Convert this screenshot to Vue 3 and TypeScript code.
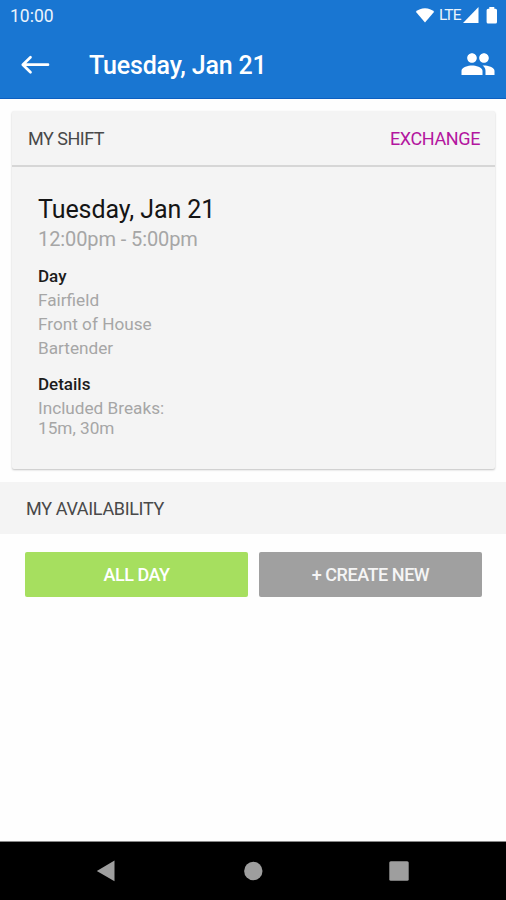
<script setup lang="ts">
interface ShiftGroup {
  title: string
  lines: string[]
  tight?: boolean
}

const date = 'Tuesday, Jan 21'
const hours = '12:00pm - 5:00pm'
const groups: ShiftGroup[] = [
  { title: 'Day', lines: ['Fairfield', 'Front of House', 'Bartender'] },
  { title: 'Details', lines: ['Included Breaks:', '15m, 30m'], tight: true },
]
</script>

<template>
  <div class="screen">
    <header class="top">
      <div class="status">
        <span class="clock">10:00</span>
        <div class="signals">
          <svg class="wifi" width="20" height="16" viewBox="0 0 20 16">
            <path d="M.8 4.7C3.3 2.4 6.4 1.2 10 1.2s6.700 1.200 9.200 3.500L10 15.400z" />
          </svg>
          <span class="lte">LTE</span>
          <svg class="cell" width="16" height="16" viewBox="0 0 16 16"><path d="M15.500 0v16H0z" /></svg>
          <svg class="battery" width="12" height="17" viewBox="0 0 12 17">
            <path d="M3.300 0h5v1.800h1.200q1.500 0 1.500 1.500v11.700q0 1.500-1.500 1.500h-7.400q-1.500 0-1.500-1.500V3.300q0-1.500 1.500-1.500h1.200z" />
          </svg>
        </div>
      </div>
      <div class="bar">
        <button class="icon-button" aria-label="Back">
          <svg width="30" height="20" viewBox="0 0 30 20">
            <path class="arrow" d="M28 9.700H3M10.500 2.200L2.800 9.700l7.700 7.600" />
          </svg>
        </button>
        <h1 class="title">{{ date }}</h1>
        <button class="icon-button people" aria-label="People">
          <svg width="36" height="36" viewBox="0 0 24 24">
            <path d="M16 11.200c1.770 0 3.200-1.430 3.200-3.200s-1.430-3.200-3.200-3.200-3.200 1.430-3.200 3.200 1.430 3.200 3.200 3.200zM8 11.200c1.770 0 3.200-1.430 3.200-3.200S9.770 4.800 8 4.800 4.800 6.230 4.800 8s1.430 3.200 3.200 3.200zM8 13c-2.330 0-7 1.170-7 3.500V19.300h14v-2.800c0-2.330-4.670-3.500-7-3.500zM16 13c-.29 0-.62.02-.97.05 1.160.84 1.970 1.970 1.970 3.450v2.800h6v-2.800c0-2.330-4.670-3.500-7-3.500z" />
          </svg>
        </button>
      </div>
    </header>

    <main class="content">
      <section class="card">
        <div class="card-head">
          <span class="section-label shift-label">MY SHIFT</span>
          <button class="exchange">EXCHANGE</button>
        </div>
        <div class="card-body">
          <h2 class="date">{{ date }}</h2>
          <p class="hours">{{ hours }}</p>
          <div v-for="group in groups" :key="group.title" class="group" :class="{ tight: group.tight }">
            <h3 class="group-title">{{ group.title }}</h3>
            <p v-for="line in group.lines" :key="line" class="line">{{ line }}</p>
          </div>
        </div>
      </section>

      <div class="section-bar">
        <span class="section-label">MY AVAILABILITY</span>
      </div>
      <div class="actions">
        <button class="action all-day">ALL DAY</button>
        <button class="action create">+ CREATE NEW</button>
      </div>
    </main>

    <nav class="nav">
      <svg width="20" height="22" viewBox="0 0 20 22"><path d="M18.500.5v20.700L.8 10.900z" /></svg>
      <svg width="20" height="20" viewBox="0 0 20 20"><circle cx="10.300" cy="10" r="9.200" /></svg>
      <svg width="20" height="20" viewBox="0 0 20 20"><rect x=".3" y=".3" width="19.400" height="19.400" rx="1.500" /></svg>
    </nav>
  </div>
</template>

<style>
body {
  background: #fff;
}
</style>

<style scoped>
.screen {
  display: flex;
  flex-direction: column;
  width: 506px;
  height: 900px;
  overflow: hidden;
  background: #fefefe;
  font-family: Roboto, "Liberation Sans", sans-serif;
}
h1, h2, h3, p {
  margin: 0;
  font-weight: 400;
}
button {
  padding: 0;
  border: 0;
  background: none;
  font-family: inherit;
}
svg {
  display: block;
  flex: none;
}
.top {
  box-sizing: border-box;
  height: 99px;
  background: #1976d2;
  border-bottom: 1px solid #0d5fc0;
  color: #fff;
  fill: #fff;
}
.status {
  display: flex;
  justify-content: space-between;
  height: 32px;
  padding: 0 8px 0 10px;
}
.clock {
  font-size: 17.500px;
  line-height: 32px;
  color: #eaf3fc;
}
.signals {
  display: flex;
  align-items: flex-start;
  padding-top: 7px;
}
.lte {
  width: 22px;
  margin-left: 4px;
  font-size: 15.500px;
  line-height: 17px;
  letter-spacing: -0.9px;
  color: #eaf3fc;
}
.cell {
  margin-left: 2px;
}
.battery {
  margin-left: 7px;
}
.bar {
  display: flex;
  align-items: center;
  height: 66px;
  padding: 0 10.500px 0 20px;
}
.arrow {
  fill: none;
  stroke: #fff;
  stroke-width: 2.700;
  stroke-linecap: round;
  stroke-linejoin: round;
}
.title {
  flex: 1;
  margin: 2px 0 0 39px;
  font-size: 25px;
  font-weight: 500;
  line-height: 32px;
  letter-spacing: -0.17px;
}
.people {
  margin-top: -2px;
}
.content {
  flex: 1;
}
.card {
  box-sizing: border-box;
  height: 358px;
  margin: 12px 11px 0 12px;
  background: #f4f4f4;
  border-radius: 2px;
  box-shadow: 0 1px 2px rgba(0, 0, 0, 0.24);
}
.card-head {
  display: flex;
  align-items: center;
  justify-content: space-between;
  height: 54px;
  padding: 0 15px 0 16px;
  border-bottom: 2px solid #d6d6d6;
}
.section-label {
  font-size: 18px;
  letter-spacing: -0.33px;
  color: #494949;
}
.shift-label {
  letter-spacing: -0.5px;
}
.exchange {
  font-size: 18px;
  letter-spacing: -0.38px;
  color: #b3169f;
}
.card-body {
  padding: 26px 26px 0;
}
.date {
  font-size: 25px;
  line-height: 34px;
  letter-spacing: -0.07px;
  color: #151515;
}
.hours {
  margin-top: -1px;
  font-size: 20px;
  line-height: 26px;
  letter-spacing: -0.1px;
  color: #a6a6a6;
}
.group {
  margin-top: 12px;
  font-size: 17.200px;
  line-height: 24px;
}
.group-title {
  font-size: 17px;
  font-weight: 500;
  line-height: 24px;
  color: #1c1c1c;
}
.line {
  color: #a6a6a6;
}
.tight .line + .line {
  margin-top: -4px;
}
.section-bar {
  display: flex;
  align-items: center;
  height: 52px;
  margin-top: 13px;
  padding-left: 26px;
  background: #f4f4f4;
}
.actions {
  display: grid;
  grid-template-columns: 1fr 1fr;
  gap: 11px;
  padding: 18px 24px 0 25px;
}
.action {
  height: 45px;
  border-radius: 2px;
  font-size: 18px;
  font-weight: 500;
  letter-spacing: -0.45px;
  color: #fff;
}
.all-day {
  background: #a6df5f;
}
.create {
  background: #a0a0a0;
  color: #f5f5f5;
}
.nav {
  display: flex;
  align-items: center;
  justify-content: space-between;
  box-sizing: border-box;
  height: 59px;
  padding: 0 97px 0 96px;
  border-top: 1px solid #888;
  background: #000;
  fill: #9e9e9e;
}
</style>
